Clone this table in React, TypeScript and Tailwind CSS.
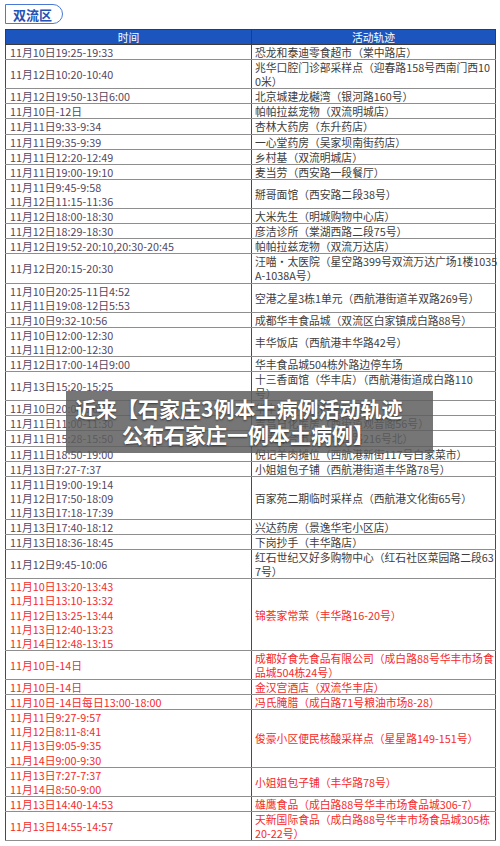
import React from "react"

type Row = { t: string[]; p: string[]; red?: boolean }

const rows: Row[] = [
  { t: ["11月10日19:25-19:33"], p: ["恐龙和泰迪零食超市（棠中路店）"] },
  { t: ["11月12日10:20-10:40"], p: ["兆华口腔门诊部采样点（迎春路158号西南门西10", "0米）"] },
  { t: ["11月12日19:50-13日6:00"], p: ["北京城建龙樾湾（银河路160号）"] },
  { t: ["11月10日-12日"], p: ["帕帕拉兹宠物（双流明城店）"] },
  { t: ["11月11日9:33-9:34"], p: ["杏林大药房（东升药店）"] },
  { t: ["11月11日9:35-9:39"], p: ["一心堂药房（吴家坝南街药店）"] },
  { t: ["11月11日12:20-12:49"], p: ["乡村基（双流明城店）"] },
  { t: ["11月11日19:00-19:10"], p: ["麦当劳（西安路一段餐厅）"] },
  { t: ["11月11日9:45-9:58", "11月12日11:15-11:36"], p: ["掰哥面馆（西安路二段38号）"] },
  { t: ["11月12日18:00-18:30"], p: ["大米先生（明城购物中心店）"] },
  { t: ["11月12日18:29-18:30"], p: ["彦洁诊所（棠湖西路二段75号）"] },
  { t: ["11月12日19:52-20:10,20:30-20:45"], p: ["帕帕拉兹宠物（双流万达店）"] },
  { t: ["11月12日20:15-20:30"], p: ["汪喵·太医院（星空路399号双流万达广场1楼1035", "A-1038A号）"] },
  { t: ["11月10日20:25-11日4:52", "11月11日19:08-12日5:53"], p: ["空港之星3栋1单元（西航港街道羊双路269号）"] },
  { t: ["11月10日9:32-10:56"], p: ["成都华丰食品城（双流区白家镇成白路88号）"] },
  { t: ["11月10日12:00-12:30", "11月11日12:00-12:30"], p: ["丰华饭店（西航港丰华路42号）"] },
  { t: ["11月12日17:00-14日9:00"], p: ["华丰食品城504栋外路边停车场"] },
  { t: ["11月13日15:20-15:25"], p: ["十三香面馆（华丰店）（西航港街道成白路110", "号）"] },
  { t: ["11月10日20:00-20:30"], p: ["华丰市场（成白路88号）"] },
  { t: ["11月11日11:00-11:30"], p: ["吉昌日化库房（西街道观音阁56号）"] },
  { t: ["11月11日15:28-15:50"], p: ["华丰综合市场（成白路216号北）"] },
  { t: ["11月11日18:50-19:00"], p: ["倪记羊肉摊位（西航港新街117号白家菜市）"] },
  { t: ["11月13日7:27-7:37"], p: ["小姐姐包子铺（西航港街道丰华路78号）"] },
  {
    t: ["11月11日19:00-19:14", "11月12日17:50-18:09", "11月13日17:18-17:39"],
    p: ["百家苑二期临时采样点（西航港文化街65号）"],
  },
  { t: ["11月13日17:40-18:12"], p: ["兴达药房（景逸华宅小区店）"] },
  { t: ["11月13日18:36-18:45"], p: ["下岗抄手（丰华路店）"] },
  { t: ["11月12日9:45-10:06"], p: ["红石世纪又好多购物中心（红石社区菜园路二段63", "7号）"] },
  {
    t: ["11月10日13:20-13:43", "11月11日13:10-13:32", "11月12日13:25-13:44", "11月13日12:40-13:23", "11月14日12:48-13:15"],
    p: ["锦荟家常菜（丰华路16-20号）"],
    red: true,
  },
  { t: ["11月10日-14日"], p: ["成都好食先食品有限公司（成白路88号华丰市场食", "品城504栋24号）"], red: true },
  { t: ["11月10日-14日"], p: ["金汉宫酒店（双流华丰店）"], red: true },
  { t: ["11月10日-14日每日13:00-18:00"], p: ["冯氏腌腊（成白路71号粮油市场8-28）"], red: true },
  {
    t: ["11月11日9:27-9:57", "11月12日8:11-8:41", "11月13日9:05-9:35", "11月14日9:00-9:30"],
    p: ["俊豪小区便民核酸采样点（星星路149-151号）"],
    red: true,
  },
  { t: ["11月13日7:27-7:37", "11月14日8:50-9:00"], p: ["小姐姐包子铺（丰华路78号）"], red: true },
  { t: ["11月13日14:40-14:53"], p: ["雄鹰食品（成白路88号华丰市场食品城306-7）"], red: true },
  { t: ["11月13日14:55-14:57"], p: ["天新国际食品（成白路88号华丰市场食品城305栋", "20-22号）"], red: true },
]

function Lines({ items }: { items: string[] }) {
  return (
    <>
      {items.map((line, i) => (
        <div key={i} className="whitespace-nowrap">
          {line}
        </div>
      ))}
    </>
  )
}

export default function App() {
  return (
    <div className="relative w-[500px] h-[846px] bg-white font-['Noto_Sans_CJK_SC',sans-serif] overflow-hidden">
      {/* district tab */}
      <div className="flex pt-[4px] pl-[5px]">
        <div className="flex h-[20px] items-center border border-[#4a7ad6] rounded-r-full rounded-l-[2px] pl-[7px] pr-[10px] text-[13px] font-bold text-[#2452b5] leading-none">
          双流区
        </div>
      </div>

      {/* schedule table */}
      <table className="mt-[5px] ml-[5px] w-[490px] table-fixed border-collapse text-[10.8px] leading-[14.1px]">
        <colgroup>
          <col className="w-[246px]" />
          <col className="w-[244px]" />
        </colgroup>
        <thead>
          <tr className="bg-[#1b55bd] text-white">
            <th className="border border-[#3b3b3b] font-normal py-0 leading-[14px]">时间</th>
            <th className="border border-[#3b3b3b] font-normal py-0 leading-[14px]">活动轨迹</th>
          </tr>
        </thead>
        <tbody>
          {rows.map((r, i) => (
            <tr key={i} className={r.red ? "text-[#f52a2a]" : ""}>
              <td
                className={`border-x border-x-[#4a4a4a] border-b border-b-[#8e8e8e] px-[4px] py-0 align-middle ${
                  r.red ? "" : "text-[#54475f]"
                }`}
              >
                <Lines items={r.t} />
              </td>
              <td
                className={`border-x border-x-[#4a4a4a] border-b border-b-[#8e8e8e] px-[3px] py-0 align-middle ${
                  r.red ? "" : "text-[#3d3d3d]"
                }`}
              >
                <Lines items={r.p} />
              </td>
            </tr>
          ))}
        </tbody>
      </table>

      {/* caption overlay */}
      <div className="absolute left-[66px] top-[391px] w-[367px] h-[62px] bg-[#5e5e5e]/85 pt-[4px] text-white text-[21px] font-bold leading-[26px] [text-shadow:0_1px_2px_rgba(0,0,0,0.55)]">
        <div className="pl-[9px] whitespace-nowrap">近来【石家庄3例本土病例活动轨迹</div>
        <div className="pl-[56px] whitespace-nowrap">公布石家庄一例本土病例】</div>
      </div>
    </div>
  )
}
